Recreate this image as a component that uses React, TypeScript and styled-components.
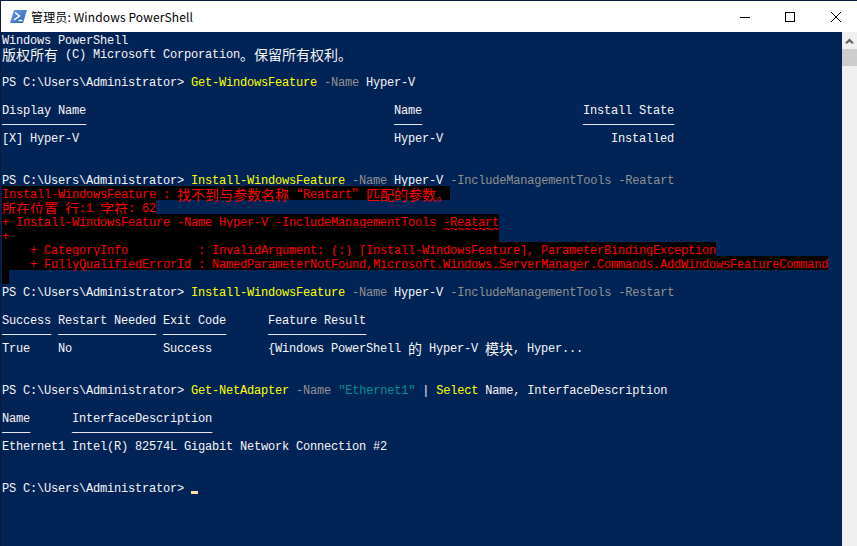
import type { CSSProperties } from 'react';
import styled, { createGlobalStyle } from 'styled-components';

const Global = createGlobalStyle`
  html, body {
    margin: 0;
    padding: 0;
    background: #ffffff;
    overflow: hidden;
  }
`;

const Window = styled.div`
  width: 857px;
  height: 546px;
  display: flex;
  flex-direction: column;
  overflow: hidden;
  background: #ffffff;
  border-top: 1px solid #0b1a3a;
  border-left: 1px solid #0b1a3a;
  box-sizing: border-box;
`;

const TitleBar = styled.div`
  height: 31px;
  flex-shrink: 0;
  display: flex;
  align-items: center;
  padding-left: 9px;
  font-family: 'Noto Sans CJK SC', 'Noto Sans', sans-serif;
  font-size: 12px;
  letter-spacing: 0.13px;
  color: #000000;
`;

const AppIcon = styled.svg`
  width: 17px;
  height: 13px;
  margin-right: 4px;
  flex-shrink: 0;
`;

const TitleText = styled.span`
  flex: 1;
`;

const WindowButton = styled.div<{ $close?: boolean }>`
  width: ${(p) => (p.$close ? '42px' : '45px')};
  margin-left: ${(p) => (p.$close ? '3px' : '0')};
  height: 31px;
  display: flex;
  align-items: center;
  justify-content: center;
`;

const Body = styled.div`
  flex: 1;
  display: flex;
  min-height: 0;
`;

const Console = styled.div`
  flex: 1;
  min-width: 0;
  background: #012456;
  padding-left: 1px;
  overflow: hidden;
  font-family: 'Liberation Mono', monospace;
  font-size: 12px;
  letter-spacing: -0.2px;
  color: #f6f6f8;
`;

const Line = styled.div`
  height: 14px;
  line-height: 18px;
  white-space: pre;
`;

const Seg = styled.span<{ $tone?: 'cmd' | 'param' | 'str' }>`
  color: ${(p) =>
    p.$tone === 'cmd'
      ? '#ffff00'
      : p.$tone === 'param'
        ? '#909090'
        : p.$tone === 'str'
          ? '#008f8f'
          : 'inherit'};
`;

const ErrorText = styled.span`
  display: inline-block;
  height: 14px;
  vertical-align: top;
  color: #ff0000;
  background: #000000;
`;

const Cjk = styled.span`
  font-family: 'Noto Sans CJK SC', sans-serif;
  font-size: 14px;
  letter-spacing: 0;
  display: inline-block;
  width: calc(var(--n) * 14px);
  height: 14px;
  line-height: 16px;
  vertical-align: top;
`;

const Squiggle = styled.span`
  display: inline-block;
  transform: translateY(-7px);
`;

const Cursor = styled.span`
  display: inline-block;
  width: 7px;
  height: 3px;
  background: #fedba9;
  vertical-align: -2px;
`;

const Scrollbar = styled.div`
  width: 15px;
  flex-shrink: 0;
  background: #f0f0f0;
  display: flex;
  flex-direction: column;
  align-items: center;
`;

const ScrollArrow = styled.div`
  height: 17px;
  width: 100%;
  display: flex;
  align-items: center;
  justify-content: center;
`;

const ScrollThumb = styled.div`
  width: 100%;
  height: 17px;
  background: #cdcdcd;
`;

function Zh({ children }: { children: string }) {
  return <Cjk style={{ '--n': children.length } as CSSProperties}>{children}</Cjk>;
}

const Prompt = 'PS C:\\Users\\Administrator> ';

function App() {
  return (
    <>
      <Global />
      <Window>
        <TitleBar>
          <AppIcon viewBox="0 0 17 13">
            <defs>
              <linearGradient id="ps" x1="0" y1="0" x2="1" y2="1">
                <stop offset="0" stopColor="#6ea3e8" />
                <stop offset="1" stopColor="#2b5fb0" />
              </linearGradient>
            </defs>
            <polygon points="4,0 17,0 13,13 0,13" fill="url(#ps)" />
            <path d="M5 2.5 L9.5 6 L4 10" fill="none" stroke="#ffffff" strokeWidth="1.4" />
            <path d="M8.5 10.5 H12.5" stroke="#ffffff" strokeWidth="1.4" />
          </AppIcon>
          <TitleText>管理员: Windows PowerShell</TitleText>
          <WindowButton>
            <svg width="10" height="10" viewBox="0 0 10 10">
              <path d="M0 5.5 H10" stroke="#000" strokeWidth="1" />
            </svg>
          </WindowButton>
          <WindowButton>
            <svg width="10" height="10" viewBox="0 0 10 10">
              <rect x="0.5" y="0.5" width="9" height="9" fill="none" stroke="#000" strokeWidth="1" />
            </svg>
          </WindowButton>
          <WindowButton $close>
            <svg width="10" height="10" viewBox="0 0 10 10">
              <path d="M0 0 L10 10 M10 0 L0 10" stroke="#000" strokeWidth="1" />
            </svg>
          </WindowButton>
        </TitleBar>
        <Body>
          <Console>
            <Line>Windows PowerShell</Line>
            <Line>
              <Zh>版权所有</Zh> (C) Microsoft Corporation<Zh>。保留所有权利。</Zh>
            </Line>
            <Line />
            <Line>
              {Prompt}
              <Seg $tone="cmd">Get-WindowsFeature</Seg> <Seg $tone="param">-Name</Seg> Hyper-V
            </Line>
            <Line />
            <Line>{'Display Name                                            Name                       Install State'}</Line>
            <Line>{'────────────                                            ────                       ─────────────'}</Line>
            <Line>{'[X] Hyper-V                                             Hyper-V                        Installed'}</Line>
            <Line />
            <Line />
            <Line>
              {Prompt}
              <Seg $tone="cmd">Install-WindowsFeature</Seg> <Seg $tone="param">-Name</Seg> Hyper-V{' '}
              <Seg $tone="param">-IncludeManagementTools</Seg> <Seg $tone="param">-Reatart</Seg>
            </Line>
            <Line>
              <ErrorText>
                Install-WindowsFeature : <Zh>找不到与参数名称</Zh>
                <Zh>“</Zh>Reatart<Zh>”</Zh>
                <Zh>匹配的参数。</Zh>
              </ErrorText>
            </Line>
            <Line>
              <ErrorText>
                <Zh>所在位置</Zh> <Zh>行</Zh>:1 <Zh>字符</Zh>: 62
              </ErrorText>
            </Line>
            <Line>
              <ErrorText>{'+ Install-WindowsFeature -Name Hyper-V -IncludeManagementTools -Reatart'}</ErrorText>
            </Line>
            <Line>
              <ErrorText>
                {'+                                                              '}
                <Squiggle>~~~~~~~~</Squiggle>
              </ErrorText>
            </Line>
            <Line>
              <ErrorText>{'    + CategoryInfo          : InvalidArgument: (:) [Install-WindowsFeature], ParameterBindingException'}</ErrorText>
            </Line>
            <Line>
              <ErrorText>{'    + FullyQualifiedErrorId : NamedParameterNotFound,Microsoft.Windows.ServerManager.Commands.AddWindowsFeatureCommand'}</ErrorText>
            </Line>
            <Line>
              <ErrorText> </ErrorText>
            </Line>
            <Line>
              {Prompt}
              <Seg $tone="cmd">Install-WindowsFeature</Seg> <Seg $tone="param">-Name</Seg> Hyper-V{' '}
              <Seg $tone="param">-IncludeManagementTools</Seg> <Seg $tone="param">-Restart</Seg>
            </Line>
            <Line />
            <Line>{'Success Restart Needed Exit Code      Feature Result'}</Line>
            <Line>{'─────── ────────────── ─────────      ──────────────'}</Line>
            <Line>
              {'True    No             Success        {Windows PowerShell '}
              <Zh>的</Zh> Hyper-V <Zh>模块</Zh>, Hyper...
            </Line>
            <Line />
            <Line />
            <Line>
              {Prompt}
              <Seg $tone="cmd">Get-NetAdapter</Seg> <Seg $tone="param">-Name</Seg>{' '}
              <Seg $tone="str">"Ethernet1"</Seg> | <Seg $tone="cmd">Select</Seg> Name, InterfaceDescription
            </Line>
            <Line />
            <Line>{'Name      InterfaceDescription'}</Line>
            <Line>{'────      ────────────────────'}</Line>
            <Line>{'Ethernet1 Intel(R) 82574L Gigabit Network Connection #2'}</Line>
            <Line />
            <Line />
            <Line>
              {Prompt}
              <Cursor />
            </Line>
          </Console>
          <Scrollbar>
            <ScrollArrow>
              <svg width="9" height="6" viewBox="0 0 9 6">
                <path d="M4.5 0.5 L8.5 4.5 L8.5 5.5 L6.5 5.5 L4.5 3.5 L2.5 5.5 L0.5 5.5 L0.5 4.5 Z" fill="#606060" />
              </svg>
            </ScrollArrow>
            <ScrollThumb />
          </Scrollbar>
        </Body>
      </Window>
    </>
  );
}

export default App;
